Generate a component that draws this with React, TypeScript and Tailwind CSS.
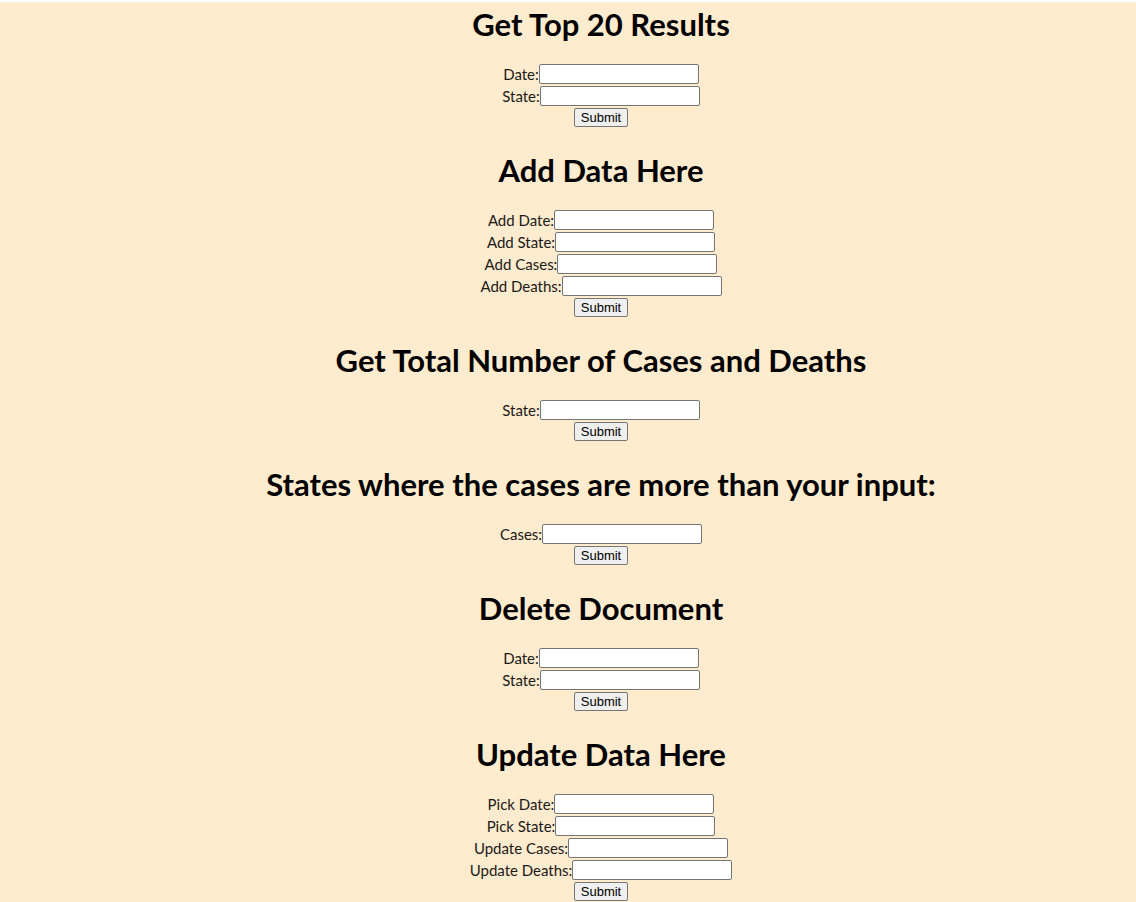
const sections = [
  { title: "Get Top 20 Results", fields: ["Date:", "State:"] },
  { title: "Add Data Here", fields: ["Add Date:", "Add State:", "Add Cases:", "Add Deaths:"] },
  { title: "Get Total Number of Cases and Deaths", fields: ["State:"] },
  { title: "States where the cases are more than your input:", fields: ["Cases:"] },
  { title: "Delete Document", fields: ["Date:", "State:"] },
  { title: "Update Data Here", fields: ["Pick Date:", "Pick State:", "Update Cases:", "Update Deaths:"] },
];

export default function App() {
  return (
    <div className="bg-white pt-[2px]">
      <div className="bg-[#ffebcd] pt-[5px] pl-[66px] pb-[1px] text-black" style={{ fontFamily: "Lato, sans-serif" }}>
        {sections.map((s) => (
          <div key={s.title} className="flex flex-col items-center mb-[26px] last:mb-0">
            <h2 className="text-[31px] font-bold leading-[34px] h-[34px] whitespace-nowrap">{s.title}</h2>
            <form className="flex flex-col items-center gap-[2px] mt-[23px]" onSubmit={(e) => e.preventDefault()}>
              {s.fields.map((f) => (
                <div key={f} className="flex items-center h-[20px]">
                  <label className="text-[15px] leading-[20px] text-[#1a1a1a]">{f}</label>
                  <input
                    type="text"
                    className="w-[160px] h-[20px] bg-white border border-[#767676] rounded-[2px]"
                  />
                </div>
              ))}
              <button
                type="submit"
                className="h-[19px] px-[6px] text-[13px] leading-[15px] bg-[#efefef] border border-[#767676] rounded-[2px]"
                style={{ fontFamily: "Arial, 'Liberation Sans', sans-serif" }}
              >
                Submit
              </button>
            </form>
          </div>
        ))}
      </div>
    </div>
  );
}
